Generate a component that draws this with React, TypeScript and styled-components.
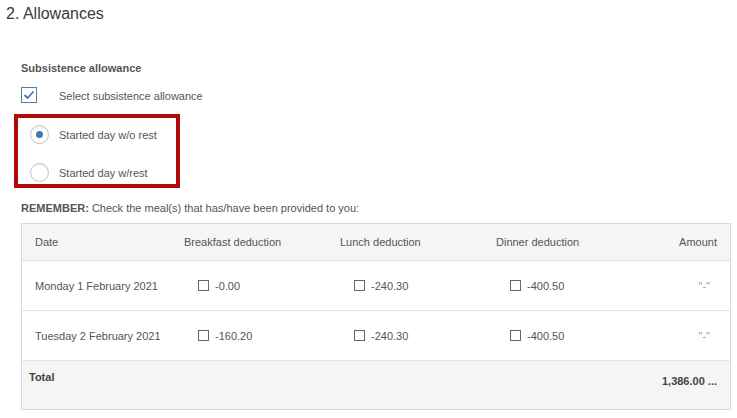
import React from 'react';
import styled, { createGlobalStyle } from 'styled-components';

const GlobalStyle = createGlobalStyle`
  body {
    margin: 0;
    font-family: 'Liberation Sans', Arial, sans-serif;
    font-size: 11px;
    color: #555;
    background: #fff;
  }
`;

type Row = {
  date: string;
  breakfast: string;
  lunch: string;
  dinner: string;
  amount: string;
};

const rows: Row[] = [
  {
    date: 'Monday 1 February 2021',
    breakfast: '-0.00',
    lunch: '-240.30',
    dinner: '-400.50',
    amount: '"-"',
  },
  {
    date: 'Tuesday 2 February 2021',
    breakfast: '-160.20',
    lunch: '-240.30',
    dinner: '-400.50',
    amount: '"-"',
  },
];

const CheckMark = (): JSX.Element => (
  <svg width="12" height="10" viewBox="0 0 12 10">
    <polyline
      points="1.5,5 4.5,8 10.5,1.5"
      fill="none"
      stroke="#3b7bbf"
      strokeWidth="1.8"
    />
  </svg>
);

const App = (): JSX.Element => {
  return (
    <Page>
      <GlobalStyle />
      <Title>2. Allowances</Title>
      <Section>
        <SubHeading>Subsistence allowance</SubHeading>
        <CheckRow>
          <BigCheckbox>
            <CheckMark />
          </BigCheckbox>
          <Label>Select subsistence allowance</Label>
        </CheckRow>
        <Highlight>
          <RadioRow>
            <Radio checked />
            <Label>Started day w/o rest</Label>
          </RadioRow>
          <RadioRow>
            <Radio />
            <Label>Started day w/rest</Label>
          </RadioRow>
        </Highlight>
        <Reminder>
          <b>REMEMBER:</b> Check the meal(s) that has/have been provided to you:
        </Reminder>
        <Table>
          <HeaderRow>
            <Cell>Date</Cell>
            <Cell>Breakfast deduction</Cell>
            <Cell>Lunch deduction</Cell>
            <Cell>Dinner deduction</Cell>
            <Cell align="right">Amount</Cell>
          </HeaderRow>
          {rows.map((r) => (
            <BodyRow key={r.date}>
              <Cell>{r.date}</Cell>
              <MealCell>
                <SmallCheckbox />
                {r.breakfast}
              </MealCell>
              <MealCell>
                <SmallCheckbox />
                {r.lunch}
              </MealCell>
              <MealCell>
                <SmallCheckbox />
                {r.dinner}
              </MealCell>
              <EmptyAmount>{r.amount}</EmptyAmount>
            </BodyRow>
          ))}
          <TotalRow>
            <TotalLabel>Total</TotalLabel>
            <TotalAmount>1,386.00 ...</TotalAmount>
          </TotalRow>
        </Table>
      </Section>
    </Page>
  );
};

export default App;

const Page = styled.div`
  width: 737px;
  box-sizing: border-box;
  padding: 4px 6px 0 6px;
`;
const Title = styled.div`
  font-size: 16px;
  line-height: 20px;
  color: #3a3a3a;
`;
const Section = styled.div`
  padding-left: 15px;
  margin-top: 37px;
  display: flex;
  flex-direction: column;
`;
const SubHeading = styled.div`
  font-weight: bold;
  line-height: 14px;
  color: #555;
`;
const CheckRow = styled.div`
  display: flex;
  align-items: center;
  gap: 22px;
  margin-top: 12px;
  height: 16px;
`;
const BigCheckbox = styled.div`
  width: 16px;
  height: 16px;
  box-sizing: border-box;
  border: 1px solid #5f7d99;
  display: flex;
  align-items: center;
  justify-content: center;
`;
const Label = styled.span`
  line-height: 14px;
  padding-top: 1px;
`;
const Highlight = styled.div`
  width: 166px;
  box-sizing: border-box;
  margin: 11px 0 0 -7px;
  border: 4px solid #b30808;
  padding: 7px 0 2px 12px;
  display: flex;
  flex-direction: column;
  gap: 19px;
`;
const RadioRow = styled.div`
  display: flex;
  align-items: center;
  gap: 10px;
  height: 19px;
`;
const Radio = styled.span<{ checked?: boolean }>`
  width: 19px;
  height: 19px;
  box-sizing: border-box;
  border-radius: 50%;
  border: 1px solid #c4c4c4;
  background: #fff;
  box-shadow: inset 0 1px 2px rgba(0, 0, 0, 0.08);
  position: relative;

  &::after {
    content: '';
    display: ${(p) => (p.checked ? 'block' : 'none')};
    position: absolute;
    left: 5px;
    top: 5px;
    width: 7px;
    height: 7px;
    border-radius: 50%;
    background: #3f79b5;
  }
`;
const Reminder = styled.div`
  margin-top: 13px;
  line-height: 14px;

  b {
    font-weight: bold;
  }
`;
const Table = styled.div`
  margin-top: 8px;
  width: 710px;
  box-sizing: border-box;
  border: 1px solid #d9d9d9;
`;
const GridRow = styled.div`
  display: grid;
  grid-template-columns: 149px 156px 156px 156px 1fr;
`;
const HeaderRow = styled(GridRow)`
  height: 36px;
  align-items: center;
  background: #f5f5f5;
  border-bottom: 1px solid #e3e3e3;
`;
const BodyRow = styled(GridRow)`
  height: 49px;
  align-items: center;
  border-bottom: 1px solid #e3e3e3;
`;
const Cell = styled.div<{ align?: 'left' | 'right' }>`
  padding: 0 13px;
  line-height: 14px;
  text-align: ${(p) => p.align || 'left'};
  white-space: nowrap;
`;
const MealCell = styled.div`
  display: flex;
  align-items: center;
  gap: 6px;
  padding-left: 27px;
  line-height: 14px;
`;
const SmallCheckbox = styled.span`
  width: 11px;
  height: 11px;
  box-sizing: border-box;
  border: 1px solid #666;
  background: #fff;
`;
const EmptyAmount = styled.div`
  text-align: right;
  padding-right: 20px;
  color: #999;
  line-height: 14px;
`;
const TotalRow = styled.div`
  height: 48px;
  display: flex;
  justify-content: space-between;
  align-items: flex-start;
  background: #f5f5f5;
`;
const TotalLabel = styled.div`
  padding: 9px 0 0 7px;
  font-weight: bold;
  color: #444;
  line-height: 14px;
`;
const TotalAmount = styled.div`
  padding: 13px 13px 0 0;
  font-weight: bold;
  color: #444;
  line-height: 14px;
`;
